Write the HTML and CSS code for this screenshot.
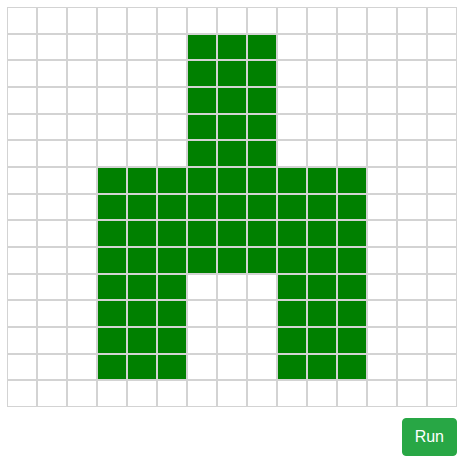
FILE: index.html
```html
<!DOCTYPE html>
<html lang="en">
<head>
    <meta charset="UTF-8">
    <meta name="viewport" content="width=device-width, initial-scale=1.0">
    <title>Pixel Grid</title>
    <link rel="stylesheet" href="styles.css">
</head>
<body>

    <div class="container">
        <!-- Grid of cells, filled from the pattern below -->
        <div id="grid" class="grid"></div>

        <div class="actions">
            <button class="btn-run" type="button">Run</button>
        </div>
    </div>

    <script>
        // 1 = filled cell, 0 = empty cell
        const pattern = [
            "000000000000000",
            "000000111000000",
            "000000111000000",
            "000000111000000",
            "000000111000000",
            "000000111000000",
            "000111111111000",
            "000111111111000",
            "000111111111000",
            "000111111111000",
            "000111000111000",
            "000111000111000",
            "000111000111000",
            "000111000111000",
            "000000000000000"
        ];

        const grid = document.getElementById("grid");
        pattern.forEach(row => {
            for (let i = 0; i < row.length; i++) {
                const cell = document.createElement("div");
                cell.className = row[i] === "1" ? "cell filled" : "cell";
                grid.appendChild(cell);
            }
        });
    </script>

</body>
</html>
```

FILE: styles.css
```css
body {
    font-family: 'Liberation Sans', Arial, sans-serif;
    background-color: #ffffff;
    margin: 0;
    padding: 7px;
}

.container {
    width: 450px;
}

.grid {
    display: grid;
    grid-template-columns: repeat(15, 30px);
    grid-template-rows: repeat(15, 1fr);
    height: 400px;
}

.cell {
    border: 1px solid #d3d3d3;
    background-color: #ffffff;
}

.cell.filled {
    background-color: #008000;
}

.actions {
    display: flex;
    justify-content: flex-end;
    margin-top: 11px;
}

.btn-run {
    font-family: 'Liberation Sans', Arial, sans-serif;
    font-size: 16px;
    line-height: 1.5;
    color: #ffffff;
    background-color: #28a745;
    border: 1px solid #28a745;
    border-radius: 4px;
    padding: 6px 12px;
    cursor: pointer;
}
```
